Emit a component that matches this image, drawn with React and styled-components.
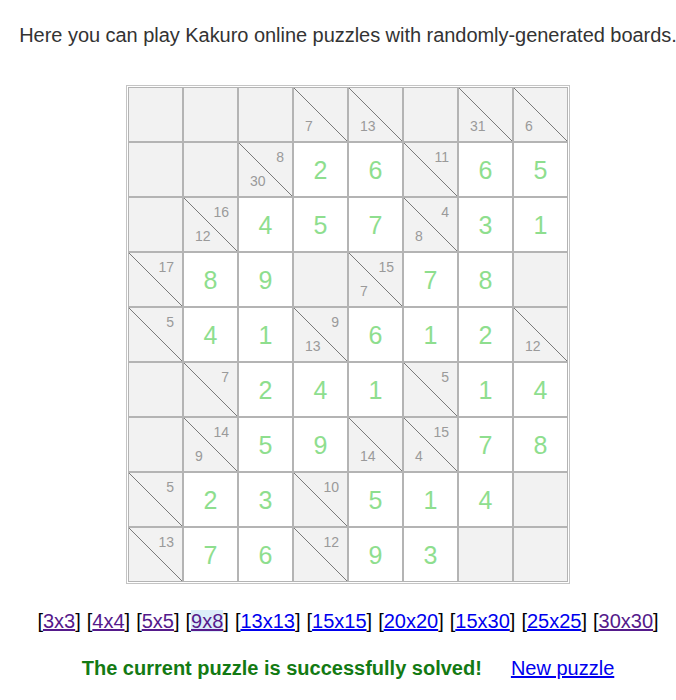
import styled, { createGlobalStyle } from 'styled-components';

const GlobalStyle = createGlobalStyle`
    body {
        margin: 0;
        background: #ffffff;
        font-family: 'Liberation Sans', Arial, sans-serif;
    }
`;

// null = empty grey cell, number = solved entry, [down, across] = clue cell
const board = [
    [null, null, null, [7, 0], [13, 0], null, [31, 0], [6, 0]],
    [null, null, [30, 8], 2, 6, [0, 11], 6, 5],
    [null, [12, 16], 4, 5, 7, [8, 4], 3, 1],
    [[0, 17], 8, 9, null, [7, 15], 7, 8, null],
    [[0, 5], 4, 1, [13, 9], 6, 1, 2, [12, 0]],
    [null, [0, 7], 2, 4, 1, [0, 5], 1, 4],
    [null, [9, 14], 5, 9, [14, 0], [4, 15], 7, 8],
    [[0, 5], 2, 3, [0, 10], 5, 1, 4, null],
    [[0, 13], 7, 6, [0, 12], 9, 3, null, null],
];

const sizes = [
    { label: '3x3', visited: true },
    { label: '4x4', visited: true },
    { label: '5x5', visited: true },
    { label: '9x8', visited: true, current: true },
    { label: '13x13' },
    { label: '15x15' },
    { label: '20x20' },
    { label: '15x30' },
    { label: '25x25' },
    { label: '30x30', visited: true },
];

export default function App() {
    return (
        <Page>
            <GlobalStyle />
            <Intro>Here you can play Kakuro online puzzles with randomly-generated boards.</Intro>
            <Board>
                {board.map((row, r) => row.map((cell, c) => {
                    if (cell === null) return <Cell key={`${r}-${c}`} />;
                    if (typeof cell === 'number') return <Cell key={`${r}-${c}`} $entry><Digit>{cell}</Digit></Cell>;
                    const [down, across] = cell;
                    return (
                        <Cell key={`${r}-${c}`} $clue>
                            {across > 0 && <Across>{across}</Across>}
                            {down > 0 && <Down>{down}</Down>}
                        </Cell>
                    );
                }))}
            </Board>
            <Sizes>
                {sizes.map((s) => (
                    <Bracket key={s.label}>
                        [<SizeLink href="#" $visited={s.visited} $current={s.current}>{s.label}</SizeLink>]
                    </Bracket>
                ))}
            </Sizes>
            <Status>
                <Solved>The current puzzle is successfully solved!</Solved>
                <NewPuzzle href="#">New puzzle</NewPuzzle>
            </Status>
        </Page>
    );
}

const Page = styled.div`
    width: 680px;
    margin-left: 8px;
    display: flex;
    flex-direction: column;
    align-items: center;
`;

const Intro = styled.p`
    margin: 24px 0 0;
    font-size: 20px;
    line-height: 22px;
    letter-spacing: -0.04px;
    color: #333333;
    white-space: nowrap;
`;

const Board = styled.div`
    margin-top: 39px;
    display: grid;
    grid-template-columns: repeat(8, 55px);
    grid-auto-rows: 55px;
    padding: 1px;
    border: 1px solid #c4c4c4;
    background: #ffffff;
`;

const Cell = styled.div`
    position: relative;
    box-sizing: border-box;
    border: 1px solid #b4b4b4;
    background: ${p => p.$entry ? '#ffffff' : '#f2f2f2'};
    ${p => p.$clue && `
        background-image: linear-gradient(to top right, transparent calc(50% - 0.6px), #7a7a7a 50%, transparent calc(50% + 0.6px));
    `}
    display: flex;
    align-items: center;
    justify-content: center;
`;

const Digit = styled.span`
    font-size: 25px;
    color: #8ede8e;
    line-height: 1;
    margin-top: 2px;
`;

const Across = styled.span`
    position: absolute;
    top: 7px;
    right: 8px;
    font-size: 14px;
    line-height: 1;
    color: #9a9a9a;
`;

const Down = styled.span`
    position: absolute;
    bottom: 8px;
    left: 11px;
    font-size: 14px;
    line-height: 1;
    color: #9a9a9a;
`;

const Sizes = styled.div`
    margin-top: 26px;
    display: flex;
    gap: 6px;
    font-size: 20px;
    line-height: 22px;
    color: #000000;
`;

const Bracket = styled.span`
    white-space: nowrap;
`;

const SizeLink = styled.a`
    color: ${p => p.$visited ? '#551a8b' : '#0000ee'};
    background: ${p => p.$current ? '#dcedf9' : 'transparent'};
    text-decoration: underline;
`;

const Status = styled.div`
    margin-top: 25px;
    display: flex;
    gap: 29px;
    align-items: baseline;
    font-size: 20px;
    line-height: 22px;
`;

const Solved = styled.b`
    color: #137a13;
`;

const NewPuzzle = styled.a`
    color: #0000ee;
    text-decoration: underline;
`;
